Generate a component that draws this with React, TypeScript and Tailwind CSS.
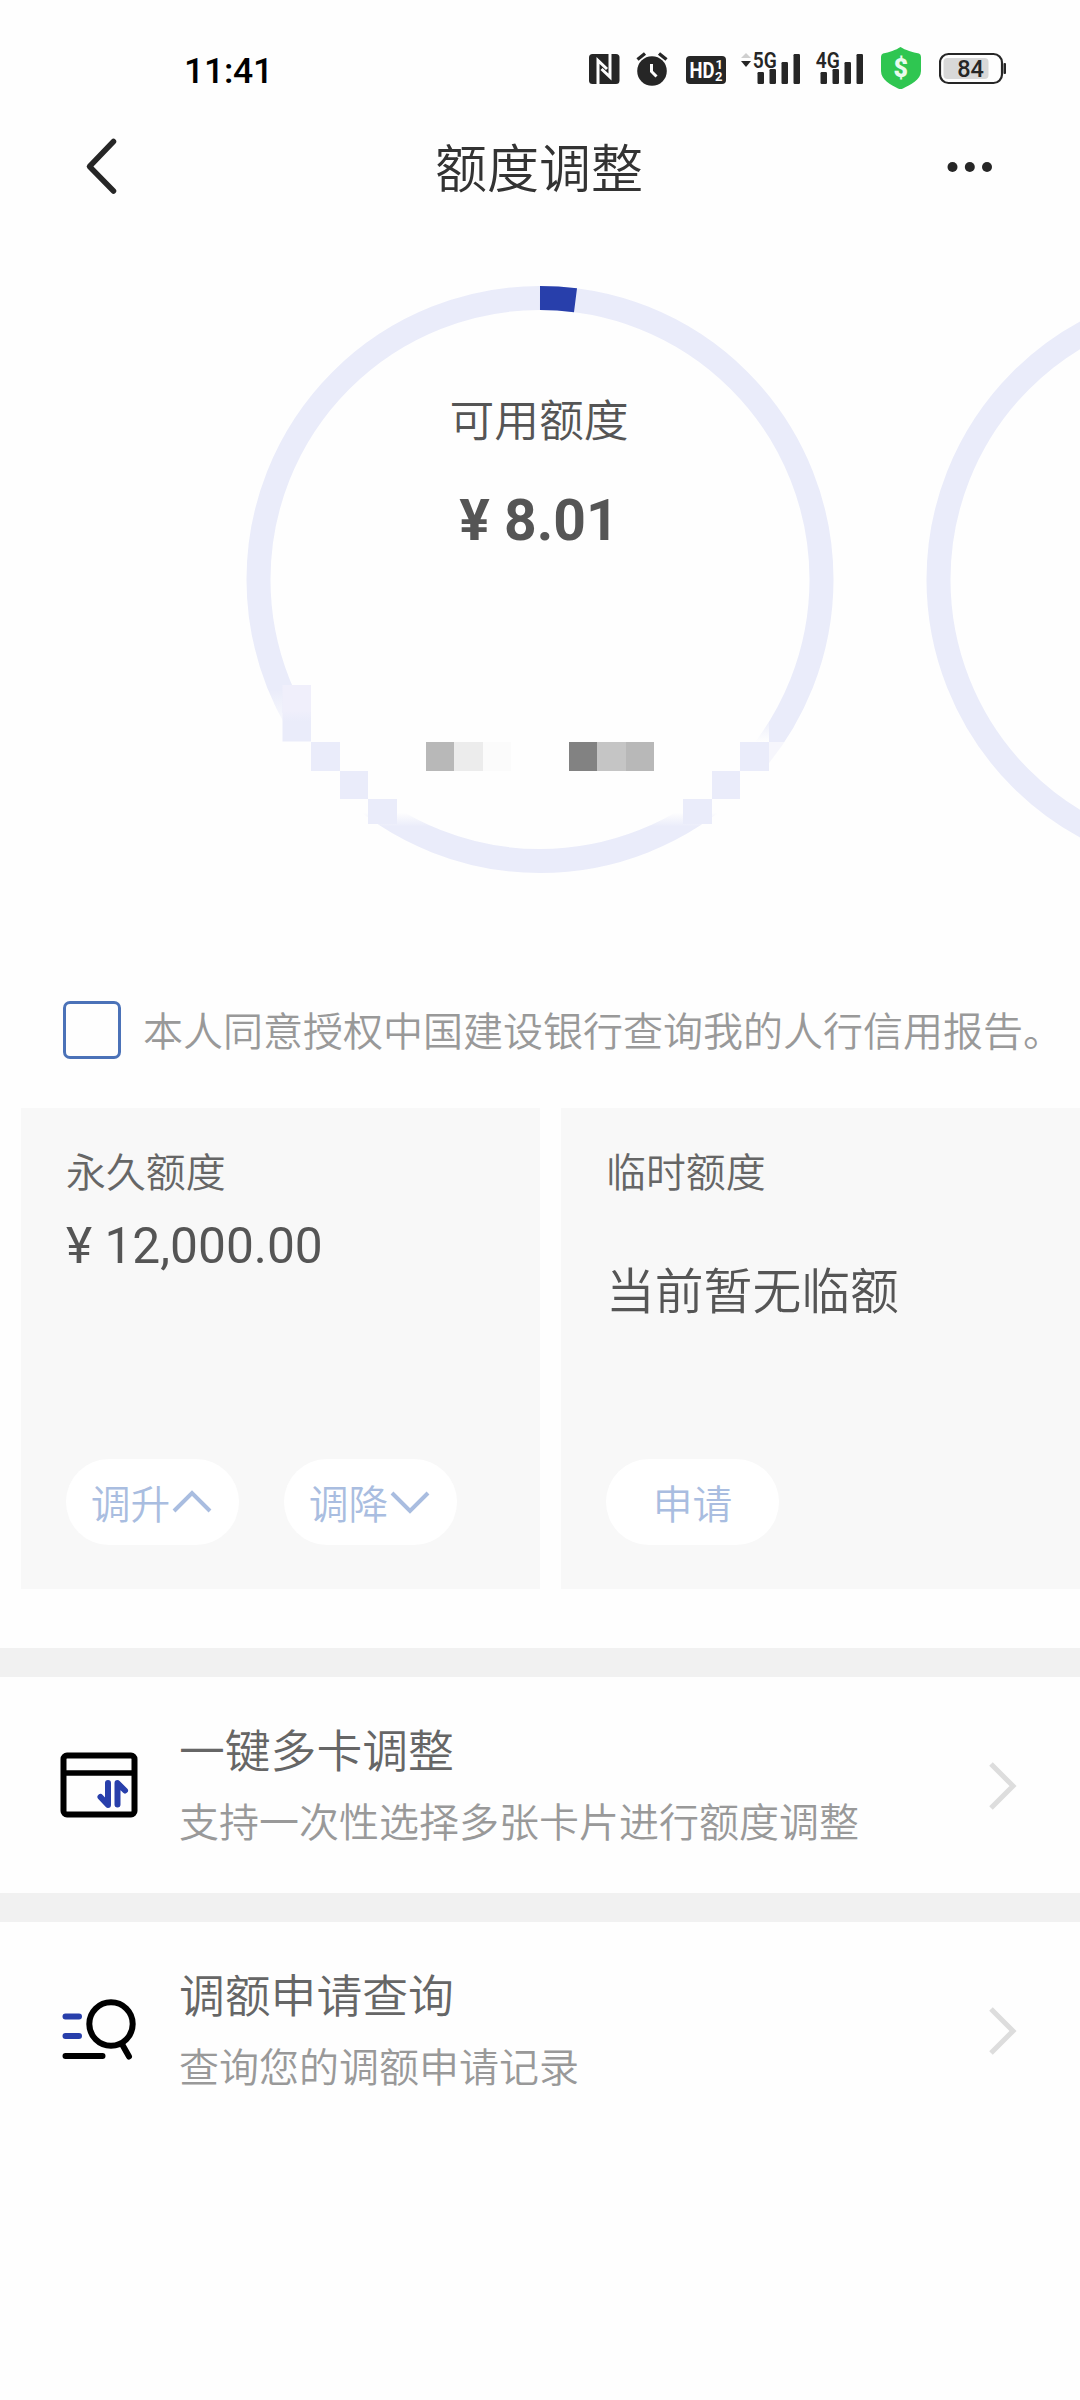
import React from 'react';

const RING = '#eaecfa';
const BLUE = '#283fab';

const BARS = [
  { x: 0, h: 12 },
  { x: 12, h: 15 },
  { x: 24, h: 22 },
  { x: 36, h: 30 },
];

const Signal: React.FC<{ label: string; arrows?: boolean }> = ({ label, arrows }) => (
  <svg width="60" height="46" viewBox="0 -8 60 46" className="-mt-[8px] block">
    {arrows && (
      <>
        <path d="M1 8l5-5 5 5z" fill="#cfcfcf" />
        <path d="M1 11h10l-5 6z" fill="#262626" />
      </>
    )}
    {BARS.map((b) => (
      <rect key={b.x} x={17.5 + b.x} y={34 - b.h} width="6.5" height={b.h} rx="1.2" fill="#262626" />
    ))}
    <text
      x="12.8"
      y="17.5"
      fontFamily="Roboto"
      fontWeight="600"
      fontSize="22"
      textLength="24"
      lengthAdjust="spacingAndGlyphs"
      fill="#262626"
      stroke="#fefefe"
      strokeWidth="2"
      paintOrder="stroke"
    >
      {label}
    </text>
  </svg>
);

const StatusBar: React.FC = () => (
  <div className="flex h-[136px] items-start pt-[50px]">
    <span className="ml-[184px] w-[405px] font-[Roboto] text-[35.5px] leading-[42px] font-medium tracking-[-0.2px] text-black">
      11:41
    </span>
    {/* NFC */}
    <svg width="31" height="38" viewBox="0 0 31 38" className="block">
      <rect x="0" y="4" width="30.5" height="30" rx="3.5" fill="#262626" />
      <path d="M9 34V10.5L18 19" fill="none" stroke="#fefefe" strokeWidth="3" />
      <path d="M21 4v23L12.5 19" fill="none" stroke="#fefefe" strokeWidth="3" />
    </svg>
    {/* alarm */}
    <svg width="32" height="38" viewBox="0 0 32 38" className="ml-[16px] block">
      <circle cx="16" cy="21" r="14.8" fill="#262626" />
      <path d="M1.5 9.5L9 3.5M30.5 9.5L23 3.5" stroke="#262626" strokeWidth="3.4" />
      <path d="M15.5 14v7.5l5 5" fill="none" stroke="#fefefe" strokeWidth="3" />
    </svg>
    {/* HD voice */}
    <svg width="41" height="38" viewBox="0 0 41 38" className="ml-[18px] block" fontFamily="Roboto" fill="#fefefe">
      <rect x="0" y="6" width="40" height="28" rx="4" fill="#262626" />
      <text x="3.5" y="27.5" fontSize="22" fontWeight="700" textLength="25" lengthAdjust="spacingAndGlyphs">
        HD
      </text>
      <text x="29.5" y="19" fontSize="13" fontWeight="700">1</text>
      <text x="29" y="31" fontSize="13" fontWeight="700">2</text>
    </svg>
    <div className="ml-[13px]">
      <Signal label="5G" arrows />
    </div>
    <div className="ml-[3px]">
      <Signal label="4G" />
    </div>
    {/* payment shield */}
    <svg width="42" height="44" viewBox="0 0 42 44" className="-mt-[4px] ml-[17px] block">
      <path
        d="M20.5 1C25 4 33 6.5 39 7.5Q41 8 41 11v14c0 9-11 14-18 17.5q-2.5 1-5 0C11 39 1 34 1 25V11Q1 8 3 7.5C9 6.5 16 4 20.5 1z"
        fill="#2fc651"
      />
      <text x="20.8" y="30.5" textAnchor="middle" fontFamily="Roboto" fontWeight="900" fontSize="25" fill="#e9fbee">
        $
      </text>
    </svg>
    <svg width="69" height="38" viewBox="0 0 69 38" className="ml-[17px] block">
      <rect x="1" y="4" width="62" height="29" rx="8.5" fill="none" stroke="#262626" strokeWidth="2.2" />
      <rect x="4.5" y="8" width="45" height="21" rx="4" fill="#d8d8d8" />
      <rect x="64.5" y="13" width="2.5" height="11" rx="1" fill="#262626" />
      <text x="31.5" y="26.5" textAnchor="middle" fontFamily="Roboto" fontSize="23.5" fontWeight="500" fill="#262626">
        84
      </text>
    </svg>
  </div>
);

const Header: React.FC = () => (
  <header className="flex h-[62px] items-center">
    <svg width="36" height="62" viewBox="0 0 36 62" className="ml-[83px] block">
      <path d="M30.5 5.5L6.5 30.5l24 24.5" fill="none" stroke="#262626" strokeWidth="5.5" strokeLinecap="round" strokeLinejoin="round" />
    </svg>
    <h1 className="flex-1 pb-[3px] pl-[14px] text-center text-[52px] leading-[59px] text-[#333]">额度调整</h1>
    <svg width="50" height="62" viewBox="0 0 50 62" className="mr-[85px] block" fill="#262626">
      <circle cx="7.5" cy="31" r="5" />
      <circle cx="24.8" cy="31" r="5" />
      <circle cx="42" cy="31" r="5" />
    </svg>
  </header>
);

// x, y, w, h, fill
const MOSAIC: [number, number, number, number, string][] = [
  [311, 742, 28.7, 29, RING],
  [339.7, 771, 28.5, 28, RING],
  [368.2, 799, 28.8, 25, RING],
  [740, 742, 28.5, 29, RING],
  [711.6, 771, 28.5, 28, RING],
  [683, 799, 28.5, 25, RING],
  [426, 742, 28.3, 28.7, '#b8b8b8'],
  [454.3, 742, 28.7, 28.7, '#ececec'],
  [483, 742, 28, 28.7, '#fbfbfb'],
  [569, 742, 28, 28.7, '#828282'],
  [597, 742, 28.7, 28.7, '#c5c5c5'],
  [625.7, 742, 28.3, 28.7, '#b8b8b8'],
];

const Gauges: React.FC = () => (
  <section className="relative h-[803px]">
    <svg width="1080" height="690" viewBox="0 198 1080 690" className="block">
      <defs>
        <linearGradient id="fadeBottom" x1="0" y1="0" x2="0" y2="1">
          <stop offset="0" stopColor="#fefefe" />
          <stop offset="1" stopColor="#fefefe" stopOpacity="0" />
        </linearGradient>
        <linearGradient id="fadeTop" x1="0" y1="0" x2="0" y2="1">
          <stop offset="0" stopColor="#fefefe" stopOpacity="0" />
          <stop offset="1" stopColor="#fefefe" />
        </linearGradient>
        <linearGradient id="block" x1="0" y1="0" x2="0" y2="1">
          <stop offset="0" stopColor="#f0effb" />
          <stop offset="0.45" stopColor="#f0effb" />
          <stop offset="0.65" stopColor="#eaecfa" />
        </linearGradient>
      </defs>
      <circle cx="540" cy="579.5" r="281.5" fill="none" stroke={RING} strokeWidth="24" />
      <path d="M540 298a281.500 281.500 0 0 1 35.500 2.250" fill="none" stroke={BLUE} strokeWidth="24" />
      <circle cx="1220" cy="579.5" r="281.5" fill="none" stroke={RING} strokeWidth="24" />

      {/* masked digits at the bottom of the dial */}
      <rect x="264" y="690" width="18.5" height="32" fill="url(#fadeTop)" opacity="0.7" />
      <rect x="740" y="718" width="29" height="24" fill="url(#fadeTop)" />
      <rect x="769" y="742" width="20" height="22" fill="#fefefe" opacity="0.6" />
      <rect x="282.5" y="713" width="458" height="100" fill="#fefefe" />
      <rect x="740" y="741.5" width="29" height="72" fill="#fefefe" />
      <rect x="282.5" y="812.5" width="486.5" height="14" fill="url(#fadeBottom)" />
      <rect x="282.5" y="685" width="28.5" height="56.5" fill="url(#block)" />
      {MOSAIC.map(([x, y, w, h, fill]) => (
        <rect key={`${x}-${y}`} x={x} y={y} width={w} height={h} fill={fill} shapeRendering="crispEdges" />
      ))}
    </svg>
    <div className="absolute top-[188px] left-[247px] w-[586px] text-center text-[#555]">
      <p className="pr-[2px] text-[44.8px] leading-[64px]">可用额度</p>
      <p className="mt-[37px] pr-[2px] font-[Roboto] text-[57px] leading-[68px] font-bold">¥ 8.01</p>
    </div>
  </section>
);

const Agreement: React.FC = () => (
  <label className="flex h-[58px] items-center pl-[63px]">
    <span className="size-[58px] rounded-[7px] border-[3px] border-[#4b72b8]" />
    <span className="ml-[22px] pb-[2px] text-[40px] leading-[56px] whitespace-nowrap text-[#999]">
      本人同意授权中国建设银行查询我的人行信用报告。
    </span>
  </label>
);

const Pill: React.FC<{ text: string; direction?: 'up' | 'down' }> = ({ text, direction }) => (
  <button className="flex h-[86px] w-[173px] items-center justify-center rounded-full bg-white pb-px text-[39.8px] leading-[60px] text-[#a9bde0]">
    <span>{text}</span>
    {direction && (
      <svg width="40" height="26" viewBox="0 0 40 26" className="mr-[2px] ml-[2px] block">
        <path
          d={direction === 'up' ? 'M2 22L20 4l18 18' : 'M2 4l18 18L38 4'}
          fill="none"
          stroke="#a9bde0"
          strokeWidth="4"
        />
      </svg>
    )}
  </button>
);

const Limits: React.FC = () => (
  <section className="mt-[49px] flex gap-[21px] pl-[21px]">
    <div className="flex h-[481px] w-[519px] flex-col bg-[#f8f8f8] pt-[32px] pl-[45px]">
      <h2 className="text-[39.9px] leading-[60px] text-[#666]">永久额度</h2>
      <p className="mt-[16px] font-[Roboto] text-[49.7px] leading-[60px] font-normal text-[#555]">¥ 12,000.00</p>
      <div className="mt-auto mb-[44px] flex gap-[45px]">
        <Pill text="调升" direction="up" />
        <Pill text="调降" direction="down" />
      </div>
    </div>
    <div className="flex h-[481px] w-[519px] flex-col bg-[#f8f8f8] pt-[32px] pl-[45px]">
      <h2 className="text-[39.9px] leading-[60px] text-[#666]">临时额度</h2>
      <p className="mt-[53px] text-[48.8px] leading-[70px] text-[#555]">当前暂无临额</p>
      <div className="mt-auto mb-[44px] flex">
        <Pill text="申请" />
      </div>
    </div>
  </section>
);

const CardIcon: React.FC = () => (
  <svg width="78" height="66" viewBox="0 0 78 66" className="block" fill="none" strokeLinecap="round" strokeLinejoin="round">
    <rect x="3.5" y="3.5" width="71" height="59" rx="3.5" stroke="#000" strokeWidth="6" />
    <path d="M4 21h70" stroke="#000" strokeWidth="5.5" />
    <path d="M48 31v22l-7.500-8M57.500 52.500V31l7.500 7.500" stroke={BLUE} strokeWidth="6" />
  </svg>
);

const SearchIcon: React.FC = () => (
  <svg width="78" height="66" viewBox="0 0 78 66" className="block" fill="none" strokeLinecap="round">
    <circle cx="51" cy="27" r="21.7" stroke="#000" strokeWidth="6" />
    <path d="M62.500 48l6.500 11.500M5.500 59h37" stroke="#000" strokeWidth="6" />
    <path d="M5.500 19.500h13.500M5.500 39h13.500" stroke={BLUE} strokeWidth="6" />
  </svg>
);

const Entry: React.FC<{ icon: React.ReactNode; title: string; desc: string }> = ({ icon, title, desc }) => (
  <div className="flex h-[245px] items-center border-t-[29px] border-[#f1f1f1] pl-[60px]">
    <div>{icon}</div>
    <div className="ml-[41px] flex-1 pb-[3px]">
      <h3 className="text-[45.8px] leading-[72px] text-[#666]">{title}</h3>
      <p className="text-[40px] leading-[72px] text-[#999]">{desc}</p>
    </div>
    <svg width="30" height="50" viewBox="0 0 30 50" className="mt-px mr-[62px] block">
      <path d="M3 3l22 22L3 47" fill="none" stroke="#ddd" strokeWidth="5" />
    </svg>
  </div>
);

const App: React.FC = () => {
  return (
    <main className="h-[2400px] w-[1080px] overflow-hidden bg-[#fefefe] font-['Noto_Sans_CJK_SC',sans-serif] font-[350]">
      <StatusBar />
      <Header />
      <Gauges />
      <Agreement />
      <Limits />
      <div className="mt-[59px]">
        <Entry icon={<CardIcon />} title="一键多卡调整" desc="支持一次性选择多张卡片进行额度调整" />
        <Entry icon={<SearchIcon />} title="调额申请查询" desc="查询您的调额申请记录" />
      </div>
    </main>
  );
};

export default App;
